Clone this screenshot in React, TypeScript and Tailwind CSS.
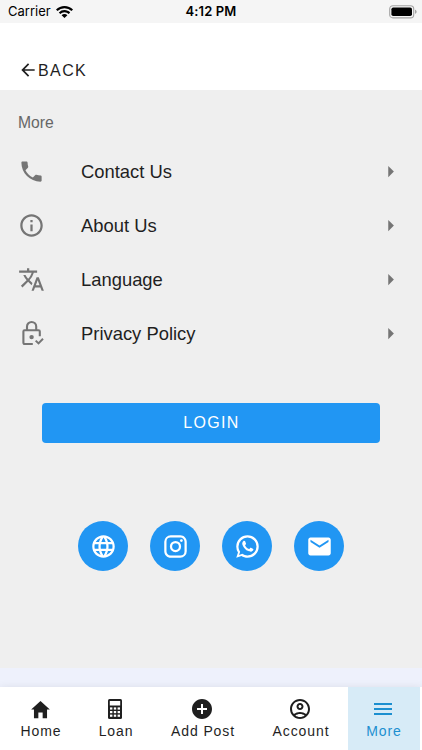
import type { ReactNode } from "react";
import { IoMdHome } from "react-icons/io";
import {
  MdAddCircle,
  MdArrowBack,
  MdArrowRight,
  MdInfoOutline,
  MdLanguage,
  MdMail,
  MdMenu,
  MdOutlineAccountCircle,
  MdPhone,
  MdTranslate,
} from "react-icons/md";

function WifiIcon() {
  return (
    <svg viewBox="0 0 17 12" className="w-[17px] h-3" fill="currentColor">
      <path d="M8.5 0C11.8 0 14.8 1.3 17 3.5l-1.5 1.6A9.8 9.8 0 0 0 8.5 2.2 9.8 9.8 0 0 0 1.5 5.1L0 3.5A12 12 0 0 1 8.5 0z" />
      <path d="M8.5 4.1c2.2 0 4.2.9 5.7 2.3l-1.5 1.6a6 6 0 0 0-8.4 0L2.8 6.4a8.2 8.2 0 0 1 5.7-2.3z" />
      <path d="M8.5 8.1c1.1 0 2.1.4 2.9 1.1L8.5 12 5.6 9.2c.8-.7 1.8-1.1 2.9-1.1z" />
    </svg>
  );
}

function BatteryIcon() {
  return (
    <svg viewBox="0 0 28 14" className="w-7 h-3.5">
      <rect x="0.7" y="0.7" width="24" height="12.2" rx="3.2" fill="none" stroke="#a3a3a3" strokeWidth="1.1" />
      <rect x="2.4" y="2.5" width="20.6" height="8.6" rx="1.8" fill="#000" />
      <path d="M26 4.8c1.1.3 1.6 1 1.6 2s-.5 1.7-1.6 2z" fill="#a3a3a3" />
    </svg>
  );
}

function LockCheckIcon() {
  return (
    <svg viewBox="0 0 27 27" className="size-[27px]" fill="none" stroke="currentColor" strokeWidth="2.1">
      <path d="M14.8 24H6.6a1.2 1.2 0 0 1-1.2-1.2V11.4a1.2 1.2 0 0 1 1.2-1.2h14a1.200 1.200 0 0 1 1.200 1.200v4.800" />
      <path d="M9 10.200V6.600a4.600 4.600 0 0 1 9.200 0v3.600" />
      <circle cx="13.600" cy="17.100" r="2.200" fill="currentColor" stroke="none" />
      <path d="M17.700 20.600l2.800 2.800 4.500-4.700" strokeWidth="2" />
    </svg>
  );
}

function InstagramIcon() {
  return (
    <svg viewBox="0 0 24 24" className="size-[27px]" fill="currentColor">
      <path d="M7.8 2h8.4C19.4 2 22 4.6 22 7.8v8.4a5.8 5.8 0 0 1-5.8 5.8H7.8C4.6 22 2 19.4 2 16.2V7.8A5.8 5.8 0 0 1 7.8 2m-.2 2A3.6 3.6 0 0 0 4 7.6v8.8C4 18.39 5.61 20 7.6 20h8.8a3.6 3.6 0 0 0 3.6-3.6V7.6C20 5.61 18.39 4 16.4 4H7.6m9.65 1.5a1.25 1.25 0 0 1 1.25 1.25A1.25 1.25 0 0 1 17.25 8 1.25 1.25 0 0 1 16 6.75a1.25 1.25 0 0 1 1.25-1.25M12 7a5 5 0 0 1 5 5 5 5 0 0 1-5 5 5 5 0 0 1-5-5 5 5 0 0 1 5-5m0 2a3 3 0 0 0-3 3 3 3 0 0 0 3 3 3 3 0 0 0 3-3 3 3 0 0 0-3-3z" />
    </svg>
  );
}

function WhatsAppIcon() {
  return (
    <svg viewBox="0 0 24 24" className="size-[27px]" fill="currentColor">
      <path d="M16.75 13.96c.25.13.41.2.46.3.06.11.04.61-.21 1.18-.2.56-1.24 1.1-1.7 1.12-.46.02-.47.36-2.96-.73-2.49-1.09-3.99-3.75-4.11-3.92-.12-.17-.96-1.38-.92-2.61.05-1.22.69-1.8.95-2.04.24-.26.51-.29.68-.26h.47c.15 0 .36-.06.55.45l.69 1.87c.06.13.1.28.01.44l-.27.41-.39.42c-.12.12-.26.25-.12.5.12.26.62 1.09 1.32 1.78.91.88 1.71 1.17 1.95 1.3.24.14.39.12.54-.04l.81-.94c.19-.25.35-.19.58-.11l1.67.88M12 2a10 10 0 0 1 10 10 10 10 0 0 1-10 10c-1.97 0-3.8-.57-5.35-1.55L2 22l1.55-4.65A9.969 9.969 0 0 1 2 12 10 10 0 0 1 12 2m0 2a8 8 0 0 0-8 8c0 1.72.54 3.31 1.46 4.61L4.5 19.5l2.89-.96A7.95 7.95 0 0 0 12 20a8 8 0 0 0 8-8 8 8 0 0 0-8-8z" />
    </svg>
  );
}

function CalculatorIcon() {
  return (
    <svg viewBox="0 0 14 20" className="w-3.5 h-5">
      <rect width="14" height="20" rx="1.5" fill="currentColor" />
      <rect x="1.8" y="2" width="10.4" height="4.5" fill="#fff" />
      {[8.4, 12, 15.6].map((y) =>
        [2, 5.8, 9.6].map((x) => <rect key={`${x}-${y}`} x={x} y={y} width="2.4" height="2.2" fill="#fff" />)
      )}
    </svg>
  );
}

const menu: { label: string; icon: ReactNode }[] = [
  { label: "Contact Us", icon: <MdPhone className="size-[27px]" /> },
  { label: "About Us", icon: <MdInfoOutline className="size-[27px]" /> },
  { label: "Language", icon: <MdTranslate className="size-[27px]" /> },
  { label: "Privacy Policy", icon: <LockCheckIcon /> },
];

const socials: { label: string; icon: ReactNode }[] = [
  { label: "Website", icon: <MdLanguage className="size-[27px]" /> },
  { label: "Instagram", icon: <InstagramIcon /> },
  { label: "WhatsApp", icon: <WhatsAppIcon /> },
  { label: "Email", icon: <MdMail className="size-[27px]" /> },
];

const tabs: { label: string; icon: ReactNode; width: string; active?: boolean }[] = [
  { label: "Home", icon: <IoMdHome className="size-[23px]" />, width: "w-[78px]" },
  { label: "Loan", icon: <CalculatorIcon />, width: "w-[72px]" },
  { label: "Add Post", icon: <MdAddCircle className="size-6" />, width: "w-[102px]" },
  { label: "Account", icon: <MdOutlineAccountCircle className="size-6" />, width: "w-[94px]" },
  { label: "More", icon: <MdMenu className="size-6" />, width: "w-[72px]", active: true },
];

export default function App() {
  return (
    <div className="flex flex-col w-[422px] h-[750px] overflow-hidden bg-[#eef1fc] font-['Liberation_Sans',Arial,sans-serif] text-[#1f1f1f]">
      {/* Status bar */}
      <div className="grid grid-cols-3 items-center h-[23px] shrink-0 pl-2 pr-[5px] bg-[#f5f5f5] font-[Inter,sans-serif] text-black">
        <div className="flex items-center gap-[5px] text-[13px]">
          Carrier
          <WifiIcon />
        </div>
        <div className="pr-[3px] text-center text-[13px] font-semibold tracking-[0.1px]">4:12 PM</div>
        <div className="flex justify-end">
          <BatteryIcon />
        </div>
      </div>

      {/* Header */}
      <header className="flex items-end h-[67px] shrink-0 pl-[18px] pb-2 bg-white">
        <button className="flex items-center text-base tracking-[1.4px]">
          <MdArrowBack className="size-5" />
          <span className="pt-0.5 -mb-px">BACK</span>
        </button>
      </header>

      <main className="flex flex-col h-[578px] shrink-0 bg-[#efefef]">
        <h1 className="pl-[18px] pt-[21px] h-[54px] text-[15.7px] leading-6 text-[#666]">More</h1>

        <ul>
          {menu.map((item) => (
            <li key={item.label} className="flex items-center h-[54px] pl-[18px] pr-[18px]">
              <span className="w-[63px] text-[#757575]">{item.icon}</span>
              <span className="flex-1 pt-0.5 text-[18.4px] leading-6">{item.label}</span>
              <MdArrowRight className="size-[27px] text-[#757575]" />
            </li>
          ))}
        </ul>

        <button className="mt-[43px] mx-[42px] h-10 shrink-0 rounded bg-[#2196f3] pl-px text-base tracking-[1.3px] text-white">
          LOGIN
        </button>

        <div className="flex justify-center gap-[22px] mt-[78px]">
          {socials.map((item) => (
            <button
              key={item.label}
              aria-label={item.label}
              className="flex items-center justify-center size-[50px] rounded-full bg-[#2196f3] text-white"
            >
              {item.icon}
            </button>
          ))}
        </div>
      </main>

      {/* Bottom tabs */}
      <nav className="flex h-[63px] shrink-0 mt-auto pl-[2px] bg-white shadow-[0_0_8px_rgba(0,0,0,0.08)]">
        {tabs.map((tab) => (
          <button
            key={tab.label}
            className={`flex flex-col items-center shrink-0 pt-[10px] ${tab.width} ${
              tab.active ? "bg-[#d7ebf7] text-[#1c8fd0]" : ""
            }`}
          >
            <span className="flex items-center justify-center h-6 pr-0.5">{tab.icon}</span>
            <span className="text-sm leading-5 tracking-[0.9px] whitespace-nowrap">{tab.label}</span>
          </button>
        ))}
      </nav>
    </div>
  );
}
